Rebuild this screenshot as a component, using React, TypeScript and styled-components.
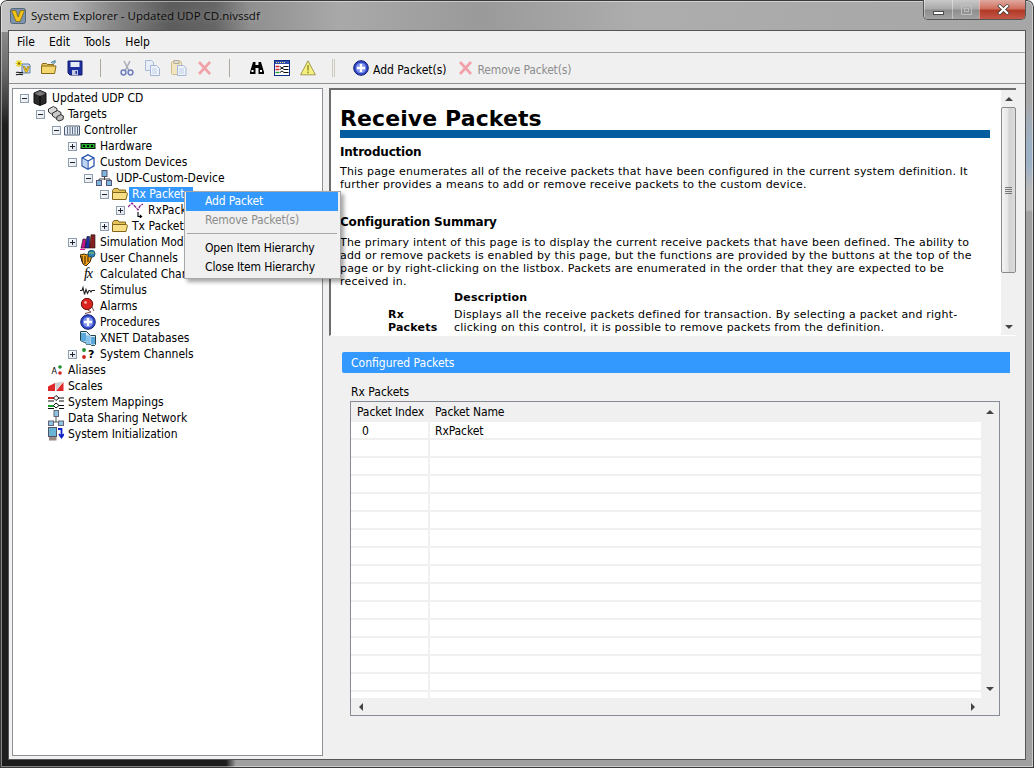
import React from "react";
import styled, { createGlobalStyle } from "styled-components";

const UI = `"DejaVu Sans Condensed", "DejaVu Sans", sans-serif`;

const Global = createGlobalStyle`
  html, body { margin: 0; padding: 0; background: #fff; }
  #root { width: 1034px; height: 768px; overflow: hidden; }
`;

const Frame = styled.div`
  position: relative;
  box-sizing: border-box;
  width: 1034px;
  height: 768px;
  padding: 0 9px 9px 9px;
  display: flex;
  flex-direction: column;
  border-radius: 7px 7px 0 0;
  box-shadow: inset 0 0 0 1px #3a3a3a, inset 0 0 0 2px rgba(255,255,255,.45);
  font: 12px ${UI};
  color: #000;
  background:
    linear-gradient(90deg, #c4c4c4 0, #b0b0b0 70px, #8a8a8a 110px, #5c5c5c 170px, #666 215px, #8f8f8f 250px, #a9a9a9 340px, #9a9a9a 480px, #adadad 640px, #a6a6a6 1034px) top / 100% 32px no-repeat,
    linear-gradient(90deg, #1d1d1d 0, #1d1d1d 226px, #a0a0a0 236px, #a0a0a0 100%) bottom / 100% 10px no-repeat,
    linear-gradient(180deg, #a8a8a8 0, #a8a8a8 100px, #9db1c6 145px, #9db1c6 165px, #b9b9b9 190px, #b9b9b9 210px, #a0a0a0 212px, #a0a0a0 100%) right / 9px 100% no-repeat,
    linear-gradient(180deg, #8c8c8c 30px, #6a6a6a 70px, #3c3c3c 105px, #1e1e1e 125px, #1e1e1e 100%) left / 9px 100% no-repeat;
`;

const TitleBar = styled.header`
  height: 31px;
  flex: none;
  display: flex;
  align-items: flex-start;
`;
const TitleGroup = styled.div`
  display: flex;
  align-items: center;
  gap: 5px;
  margin: 8px 0 0 1px;
`;
const TitleText = styled.span`
  font: 11.5px "Open Sans", "Noto Sans", sans-serif;
  line-height: 16px;
  color: #0a0a0a;
  text-shadow: 0 0 6px rgba(255,255,255,.35);
`;
const WinButtons = styled.div`
  margin-left: auto;
  margin-right: -1px;
  width: 103px;
  height: 20px;
  display: grid;
  grid-template-columns: 28px 27px 48px;
  border: 1px solid #555;
  border-top: 0;
  box-sizing: border-box;
  border-radius: 0 0 5px 5px;
  overflow: hidden;
`;
const WinButton = styled.div<{ $close?: boolean }>`
  display: flex;
  align-items: center;
  justify-content: center;
  border-left: 1px solid rgba(255,255,255,.4);
  background: ${p => p.$close
    ? "linear-gradient(180deg,#dfa99f 0,#d0705f 45%,#b23a26 55%,#c4574a 100%)"
    : "linear-gradient(180deg,#c9c9c9 0,#a8a8a8 48%,#8c8c8c 52%,#a3a3a3 100%)"};
`;
const MinGlyph = styled.i`
  display: block;
  width: 11px;
  height: 4px;
  margin-top: 7px;
  background: #fff;
  border: 1px solid #4a4a4a;
  box-sizing: border-box;
`;
const MaxGlyph = styled.i`
  display: block;
  width: 11px;
  height: 10px;
  border: 1px solid #c0c0c0;
  box-sizing: border-box;
  position: relative;
  &::after { content: ""; position: absolute; inset: 2px; border: 1px solid #bdbdbd; }
`;

const Client = styled.div`
  flex: 1;
  min-height: 0;
  display: flex;
  flex-direction: column;
  background: #f0f0f0;
  outline: 1px solid #555;
`;
const MenuBar = styled.nav`
  height: 21px;
  flex: none;
  display: flex;
  align-items: center;
  padding-left: 8px;
  gap: 14px;
  border-bottom: 1px solid #a0a0a0;
`;
const MenuLabel = styled.span`
  line-height: 18px;
  &:last-child { margin-left: 1px; }
`;
const Toolbar = styled.div`
  height: 30px;
  flex: none;
  display: flex;
  align-items: center;
  padding-left: 6px;
  border-bottom: 1px solid #8f8f8f;
`;
const ToolIcon = styled.span<{ $after: number }>`
  display: flex;
  flex: none;
  width: 16px;
  height: 16px;
  margin-right: ${p => p.$after}px;
`;
const ToolSep = styled.i<{ $after: number; $faint?: boolean }>`
  display: block;
  flex: none;
  width: 1px;
  height: 18px;
  margin-right: ${p => p.$after}px;
  background: ${p => (p.$faint ? "#cfcabf" : "#aea99c")};
`;
const ToolLabel = styled.span<{ $off?: boolean; $after?: number }>`
  color: ${p => (p.$off ? "#8d8d8d" : "#000")};
  margin-right: ${p => p.$after ?? 0}px;
  margin-left: 4px;
  padding-top: 3px;
  letter-spacing: ${p => (p.$off ? "-0.18px" : 0)};
  white-space: nowrap;
`;

const Main = styled.main`
  flex: 1;
  min-height: 0;
  display: flex;
  gap: 6px;
  padding: 4px 0 3px 3px;
`;
const TreePanel = styled.section`
  box-sizing: border-box;
  width: 311px;
  flex: none;
  padding-top: 1px;
  background: #fff;
  border: 1px solid #8c9097;
`;
const Row = styled.div<{ $level: number }>`
  height: 16px;
  display: flex;
  align-items: center;
  padding-left: ${p => 7 + p.$level * 16}px;
  white-space: nowrap;
`;
const Expander = styled.span`
  box-sizing: border-box;
  flex: none;
  width: 9px;
  height: 9px;
  margin-right: 3px;
  border: 1px solid #8f9db0;
  background: linear-gradient(135deg, #fff, #dfe4ea);
  position: relative;
  &[data-kind="none"] { border: 0; background: none; }
  &[data-kind="plus"]::before, &[data-kind="minus"]::before {
    content: ""; position: absolute; left: 1px; top: 3px; width: 5px; height: 1px; background: #223;
  }
  &[data-kind="plus"]::after {
    content: ""; position: absolute; left: 3px; top: 1px; width: 1px; height: 5px; background: #223;
  }
`;
const TreeIcon = styled.span`
  display: flex;
  flex: none;
  width: 16px;
  height: 16px;
`;
const TreeLabel = styled.span<{ $on?: boolean }>`
  margin-left: 1px;
  padding: 0 3px;
  line-height: 15px;
  color: ${p => (p.$on ? "#fff" : "#000")};
  background: ${p => (p.$on ? "#3399ff" : "transparent")};
`;

const RightPane = styled.section`
  flex: 1;
  min-width: 0;
  display: flex;
  flex-direction: column;
`;
const HelpBox = styled.div`
  box-sizing: border-box;
  width: 687px;
  height: 248px;
  flex: none;
  display: flex;
  background: #fff;
  border-top: 2px solid #6d6d6d;
  border-left: 2px solid #6d6d6d;
  border-bottom: 1px solid #fff;
  overflow: hidden;
`;
const Article = styled.article`
  flex: 1;
  min-width: 0;
  box-sizing: border-box;
  padding: 17px 11px 0 9px;
  font: 11px/13px "DejaVu Sans", sans-serif;
  letter-spacing: 0.2px;
  overflow: hidden;
`;
const H1 = styled.h1`
  margin: 0;
  font: bold 22px/23px "DejaVu Sans", sans-serif;
  letter-spacing: 0.1px;
  border-bottom: 8px solid #005c9e;
`;
const H2 = styled.h2<{ $top: number; $bottom: number }>`
  margin: ${p => p.$top}px 0 ${p => p.$bottom}px;
  font: bold 12px/15px "DejaVu Sans", sans-serif;
  letter-spacing: -0.2px;
`;
const Para = styled.p`
  margin: 0;
  white-space: pre-line;
`;
const DefTable = styled.div`
  display: grid;
  grid-template-columns: 66px 1fr;
  margin-left: 48px;
  margin-top: 3px;
`;
const DefHead = styled.b`
  display: block;
  padding-bottom: 4px;
  line-height: 13px;
  &:first-child { visibility: hidden; }
`;
const DefText = styled.span`
  white-space: pre-line;
`;

const VBar = styled.div`
  width: 15px;
  flex: none;
  display: flex;
  flex-direction: column;
  align-items: stretch;
  background: #f0f0f0;
`;
const BarArrow = styled.div<{ $dir: "up" | "down" | "left" | "right" }>`
  flex: none;
  display: flex;
  align-items: center;
  justify-content: center;
  width: 15px;
  height: 17px;
  &::before {
    content: "";
    border-style: solid;
    border-color: transparent;
    ${p => p.$dir === "up" && "border-width: 0 4px 4px; border-bottom-color: #444;"}
    ${p => p.$dir === "down" && "border-width: 4px 4px 0; border-top-color: #444;"}
    ${p => p.$dir === "left" && "border-width: 4px 4px 4px 0; border-right-color: #444;"}
    ${p => p.$dir === "right" && "border-width: 4px 0 4px 4px; border-left-color: #444;"}
  }
`;
const Thumb = styled.div`
  box-sizing: border-box;
  flex: none;
  height: 166px;
  border: 1px solid #8a8a8a;
  border-radius: 2px;
  background: linear-gradient(90deg, #f4f4f4 0, #e6e6e6 45%, #d2d2d2 55%, #dcdcdc 100%);
  display: flex;
  flex-direction: column;
  align-items: center;
  justify-content: center;
  gap: 1px;
`;
const Grip = styled.i`
  display: block;
  width: 7px;
  height: 1px;
  background: #777;
`;
const BarFill = styled.div`
  flex: 1;
`;

const SectionBar = styled.div`
  box-sizing: border-box;
  margin: 16px 0 0 13px;
  width: 668px;
  height: 21px;
  flex: none;
  display: flex;
  align-items: center;
  padding-left: 9px;
  background: #3399ff;
  color: #fff;
  border-radius: 2px 0 0 2px;
`;
const FieldLabel = styled.div`
  margin: 12px 0 0 22px;
  height: 16px;
  line-height: 15px;
  flex: none;
`;
const TableBox = styled.div`
  box-sizing: border-box;
  margin-left: 21px;
  width: 650px;
  height: 315px;
  flex: none;
  display: grid;
  grid-template-columns: 1fr 18px;
  grid-template-rows: 1fr 17px;
  border: 1px solid #868b96;
  background: #f0f0f0;
`;
const TableBody = styled.div`
  overflow: hidden;
  background: #fff;
  min-height: 0;
`;
const TableRow = styled.div<{ $head?: boolean }>`
  box-sizing: border-box;
  display: grid;
  grid-template-columns: 79px 1fr;
  height: ${p => (p.$head ? 20 : 18)}px;
  background: ${p => (p.$head ? "#f0f0f0" : "#fff")};
  border-bottom: ${p => (p.$head ? 0 : "2px solid #f0f0f0")};
`;
const Cell = styled.div<{ $center?: boolean; $first?: boolean; $head?: boolean }>`
  display: flex;
  align-items: center;
  padding-left: ${p => (p.$center ? 11 : p.$first ? 6 : 5)}px;
  padding-top: ${p => (p.$head ? 0 : 1)}px;
  border-right: ${p => (p.$first ? "2px solid #f0f0f0" : 0)};
  letter-spacing: -0.1px;
  white-space: nowrap;
`;
const TableV = styled(VBar)`
  width: 16px;
  margin-left: 1px;
  padding: 1px 0;
  box-sizing: border-box;
  border-right: 1px solid #f0f0f0;
  grid-row: 1;
  grid-column: 2;
`;
const HBar = styled.div`
  grid-row: 2;
  grid-column: 1;
  display: flex;
  justify-content: space-between;
  background: #f0f0f0;
  padding: 0 1px 0 2px;
`;

const ContextMenu = styled.div`
  position: absolute;
  left: 184px;
  top: 191px;
  box-sizing: border-box;
  width: 157px;
  height: 88px;
  padding: 0 1px;
  background: #f0f0f0;
  border: 1px solid #a8a8a8;
  box-shadow: 3px 3px 4px rgba(0,0,0,.35);
  letter-spacing: -0.15px;
`;
const MenuItem = styled.div<{ $on?: boolean; $off?: boolean }>`
  height: 19px;
  width: 152px;
  box-sizing: border-box;
  padding: 0 0 1px 19px;
  display: flex;
  align-items: center;
  background: ${p => (p.$on ? "#3399ff" : "transparent")};
  color: ${p => (p.$on ? "#fff" : p.$off ? "#8d8d8d" : "#000")};
`;
const MenuRule = styled.div`
  height: 1px;
  margin: 3px 1px 5px 1px;
  width: 150px;
  background: #a8a8a8;
`;

const Svg = ({ children, s = 16 }: { children: React.ReactNode; s?: number }) => (
  <svg width={s} height={s} viewBox="0 0 16 16">{children}</svg>
);

const LogoIcon = () => (
  <Svg>
    <rect x="0.5" y="0.5" width="15" height="15" rx="2" fill="#7d93ab" stroke="#55677d" />
    <path d="M1.5 2.5h4.2l2.4 6.5 2.4-6.5h4L10 13.5H6z" fill="#f2c318" stroke="#6b5000" strokeWidth=".6" />
  </Svg>
);
const CloseGlyph = () => (
  <svg width="13" height="11" viewBox="0 0 13 11">
    <path d="M1.5 1l10 9M11.5 1l-10 9" stroke="#333" strokeWidth="3.6" />
    <path d="M2 1.2l9 8.6M11 1.2l-9 8.6" stroke="#fff" strokeWidth="2.2" />
  </svg>
);
const NewIcon = () => (
  <Svg>
    <path d="M7 4h7l1 1v8H7z" fill="#c9d9ef" stroke="#5e7eaa" />
    <path d="M8 6.5h2l1.2 3.6 1.3-3.6H14.5L12 12.5h-1.4z" fill="#f2c318" stroke="#665000" strokeWidth=".4" />
    <path d="M4 0v7M0.5 3.5h7M1.5 1l5 5M6.5 1l-5 5" stroke="#e8cf00" strokeWidth="1.1" />
    <path d="M3.5 2.5h1v2h-1z" fill="#111" />
    <path d="M1 12.5c1.5-1 3 .8 7-.2M1 14.5c2 .6 4-1 7 .3" stroke="#222" strokeWidth="1.2" fill="none" />
  </Svg>
);
const OpenIcon = () => (
  <Svg>
    <path d="M.5 5.5l1-2h4l1 1h6v3H.5z" fill="#e9c45a" stroke="#8a6a18" />
    <path d="M.5 13.5v-6.5l1-1h13.5l-1.4 7.5z" fill="#f4d76f" stroke="#8a6a18" />
    <path d="M10 3c1-1.6 2.4-2 4-1.6M14 0v3h-3" stroke="#3a7ea0" fill="none" />
  </Svg>
);
const SaveIcon = () => (
  <Svg>
    <path d="M1 1h14v14H3l-2-2z" fill="#1d2f9f" stroke="#121e6d" />
    <rect x="3.5" y="2" width="9" height="5" fill="#e7ebf5" />
    <rect x="5" y="10" width="6" height="5" fill="#c5cbe0" />
    <rect x="8.5" y="11" width="1.5" height="3" fill="#1d2f9f" />
  </Svg>
);
const CutIcon = () => (
  <Svg>
    <path d="M5 1l4.6 9M11 1L6.4 10" stroke="#a9aeb8" strokeWidth="1.6" fill="none" />
    <circle cx="4.5" cy="12.5" r="2.4" fill="none" stroke="#6d7dbd" strokeWidth="1.5" />
    <circle cx="11.5" cy="12.5" r="2.4" fill="none" stroke="#6d7dbd" strokeWidth="1.5" />
  </Svg>
);
const CopyIcon = () => (
  <Svg>
    <path d="M1.5 .5h6l2 2v8h-8z" fill="#e8eef8" stroke="#aabbd8" />
    <path d="M6.5 5.5h6l3 3v7h-9z" fill="#eef3fb" stroke="#a3b6d6" />
    <path d="M8 9h5M8 11h5M8 13h5" stroke="#c2cfe4" />
  </Svg>
);
const PasteIcon = () => (
  <Svg>
    <rect x=".5" y="1.5" width="10" height="13" rx="1" fill="#f1e5c2" stroke="#cfbd8b" />
    <rect x="3" y=".5" width="5" height="3" fill="#ddd" stroke="#b8ad90" />
    <path d="M6.5 5.5h6l2.5 2.5v7.5H6.5z" fill="#eef3fb" stroke="#a3b6d6" />
    <path d="M8 9h5M8 11h5M8 13h5" stroke="#c2cfe4" />
  </Svg>
);
const DeleteIcon = () => (
  <Svg>
    <path d="M2 2l11 12M13 2L2 14" stroke="#f0a2a8" strokeWidth="2.6" />
  </Svg>
);
const BinocIcon = () => (
  <Svg>
    <path d="M4 2h2.5v3H9.5V2H12l3 10v2H9.5V8h-3v6H1v-2z" fill="#000" />
    <rect x="2.5" y="10" width="2" height="2" fill="#fff" />
    <rect x="11" y="10" width="2" height="2" fill="#fff" />
  </Svg>
);
const ListIcon = () => (
  <Svg>
    <rect x=".5" y=".5" width="15" height="15" fill="#fff" stroke="#0f2d86" />
    <rect x="1" y="1" width="14" height="3" fill="#2f4cb0" />
    <path d="M2 2.5h1M4 2.5h1M6 2.5h1M8 2.5h1M10 2.5h1" stroke="#ffe766" />
    <path d="M1.5 6.5h4M1.5 9.5h4" stroke="#d2262c" strokeWidth="1.4" />
    <path d="M1.5 12.5h4" stroke="#1e9b37" strokeWidth="1.4" />
    <path d="M10 6.5h4.5M10 9.5h4.5M10 12.5h4.5" stroke="#111" />
    <path d="M6 6.5l2 1.5 2-1.5M6 9.5l2-1.5 2 1.5M6 12.5l2-1.5 2 1.5" stroke="#111" fill="none" />
  </Svg>
);
const WarnIcon = () => (
  <Svg>
    <path d="M8 .8l7.4 14H.6z" fill="#f6f07e" stroke="#9f9a55" />
    <rect x="7.2" y="5" width="1.7" height="5.5" fill="#a39b32" />
    <rect x="7.2" y="11.5" width="1.7" height="1.8" fill="#a39b32" />
  </Svg>
);
const AddIcon = () => (
  <Svg>
    <circle cx="8" cy="8" r="7.3" fill="#3048c8" stroke="#14206f" />
    <circle cx="8" cy="8" r="5.2" fill="#7f92ea" />
    <path d="M8 4v8M4 8h8" stroke="#fff" strokeWidth="2.4" />
  </Svg>
);
const CubeBlack = () => (
  <Svg>
    <path d="M8 .5l6 2.5v10l-6 2.5-6-2.5V3z" fill="#2a2a2a" stroke="#111" />
    <path d="M2.5 3.5L8 6l5.5-2.5L8 1z" fill="#7a7a7a" />
    <path d="M8 6v9" stroke="#000" />
  </Svg>
);
const TargetsIcon = () => (
  <Svg>
    <path d="M0.5 3l5-2.5 3.5 2-.5 4-5 1.5-3-2z" fill="#d8d8d8" stroke="#333" />
    <path d="M4.5 7l5-2.5 3.5 2-.5 4-5 1.5-3-2z" fill="#cacaca" stroke="#333" />
    <path d="M9 10.5l4-2 2.5 1.5-.5 3.5-4 1.5-2.5-1.5z" fill="#bcbcbc" stroke="#333" />
  </Svg>
);
const ControllerIcon = () => (
  <Svg>
    <path d="M.5 5l2-1h13v9h-15z" fill="#e6ecf4" stroke="#4a5a72" />
    <path d="M3.5 5v7M6 5v7M8.5 5v7M11 5v7M13.5 5v7" stroke="#5d6d86" />
  </Svg>
);
const HardwareIcon = () => (
  <Svg>
    <rect x="1" y="5.5" width="14" height="5" fill="#1fae2c" stroke="#111" />
    <path d="M3 7h2v2H3zM7 7h2v2H7zM11 7h2v2h-2z" fill="#0a0a0a" />
  </Svg>
);
const CubeBlue = () => (
  <Svg>
    <path d="M8 .8l6 3v8l-6 3.4-6-3.4v-8z" fill="#fff" stroke="#2a57b0" strokeWidth="1.3" />
    <path d="M2 3.8l6 3.2 6-3.2M8 7v8" stroke="#2a57b0" fill="none" strokeWidth="1.3" />
    <path d="M2.8 4.8L7.4 7.4v6.4L2.8 11.2z" fill="#bcd3f2" />
  </Svg>
);
const NetIcon = () => (
  <Svg>
    <rect x="6" y=".5" width="5" height="6" fill="#7fb7dc" stroke="#557" />
    <path d="M8.5 6v4M3 10.5V9h11v1.5" stroke="#444" fill="none" />
    <rect x=".5" y="10.5" width="5" height="5" fill="#7fb7dc" stroke="#557" />
    <rect x="10.5" y="10.5" width="5" height="5" fill="#7fb7dc" stroke="#557" />
  </Svg>
);
const FolderIcon = () => (
  <Svg>
    <path d="M.5 4.5l1.5-2h4l1 1.5h6.5V7H.5z" fill="#e5c25a" stroke="#80651a" />
    <path d="M.5 13.5V6.5h13.8l1.2.8-1.5 6.2z" fill="#f8df86" stroke="#80651a" />
  </Svg>
);
const PacketIcon = () => (
  <Svg>
    <path d="M0 5l4-4 4 4.5 2 2.5 2-4 3-2" stroke="#8a1c8a" strokeWidth="1.2" fill="none" strokeDasharray="3.4 .8" />
    <path d="M10 10v4.5h3M11.8 12.8l1.8 1.7-1.8 1.4" stroke="#000" strokeWidth="1.1" fill="none" />
  </Svg>
);
const SimIcon = () => (
  <Svg>
    <path d="M1 14L3 5h2.5v9z" fill="#c8158c" stroke="#111" strokeWidth=".6" />
    <path d="M5 14L7 2.5h2.5V14z" fill="#1c2fa5" stroke="#111" strokeWidth=".6" />
    <path d="M9.5 14L11 .8h4V14z" fill="#862020" stroke="#111" strokeWidth=".6" />
    <path d="M0 15.5h5" stroke="#e018a0" strokeWidth="1.4" />
  </Svg>
);
const UserChanIcon = () => (
  <Svg>
    <path d="M0 5l4-1 3 1 3-1 2 2-2 6-4 4-3-2z" fill="#f2a21c" stroke="#3a2500" />
    <path d="M2 6v6M5 6v8M8 6v6" stroke="#2a1a00" />
    <circle cx="11.5" cy="3.8" r="3.5" fill="#2c7fb8" stroke="#164d70" />
    <path d="M9 3h5" stroke="#7ac35a" strokeWidth="1.3" />
  </Svg>
);
const FxGlyph = styled.span`
  font: italic 14px/16px "Liberation Serif", serif;
  width: 16px;
  text-align: center;
  letter-spacing: -1px;
`;
const FxIcon = () => <FxGlyph>fx</FxGlyph>;
const StimIcon = () => (
  <Svg>
    <path d="M0 8.5h2l1-3 1.5 7 1.5-5 1.5 4 1.5-3h1l1 1.5 1-1.5h3" stroke="#222" strokeWidth="1.1" fill="none" />
  </Svg>
);
const AlarmIcon = () => (
  <Svg>
    <circle cx="7" cy="6" r="5.7" fill="#d8231f" stroke="#6b0f0f" />
    <circle cx="5.5" cy="4.5" r="1.4" fill="#f8a8a0" />
    <path d="M8 12l3 2-6 1.5M12 9l2 4" stroke="#7a4a4a" fill="none" />
  </Svg>
);
const DbIcon = () => (
  <Svg>
    <path d="M.5 1.5h6l4 4h5v9l-1 1h-3l-1-1h-4l-1-2h-1l-4-2z" fill="#d8e8f4" stroke="#244" />
    <path d="M1 3h5v7.5l-1 1H2l-1-1z" fill="#5ba8dc" />
    <path d="M6 5.5h4.5v8l-1 1h-2.5l-1-1z" fill="#86c2ea" />
    <path d="M11 7h4v6.5l-1 1h-2l-1-1z" fill="#5ba8dc" />
  </Svg>
);
const SysChanIcon = () => (
  <Svg>
    <circle cx="4" cy="4" r="1.9" fill="#1c8f2a" />
    <circle cx="4" cy="11" r="1.9" fill="#d2231f" />
    <text x="8" y="12" fontSize="11" fontWeight="bold" fontFamily="DejaVu Sans">?</text>
  </Svg>
);
const AliasIcon = () => (
  <Svg>
    <text x="3.5" y="12" fontSize="8" fontFamily="DejaVu Sans">A</text>
    <circle cx="12" cy="5" r="1.8" fill="#1c8f2a" />
    <circle cx="12" cy="11" r="1.8" fill="#d2231f" />
  </Svg>
);
const ScalesIcon = () => (
  <Svg>
    <path d="M0 8.5L7 5v8H0z" fill="#e0282a" />
    <path d="M8 13L15.5 4v9z" fill="#e0282a" />
    <path d="M7 5L15 3.5 8 13z" fill="#cfcfcf" />
  </Svg>
);
const MappingsIcon = () => (
  <Svg>
    <path d="M0 4h6" stroke="#d2231f" strokeWidth="2" />
    <path d="M0 7h6M0 14.5h6" stroke="#111" />
    <path d="M0 12h6" stroke="#1c9f32" strokeWidth="2" />
    <path d="M8 1.5L11 4 8 6.5 5.5 4zM8 9L11 11.5 8 14 5.5 11.5z" fill="#fff" stroke="#111" />
    <path d="M11 4h5M11 7h5M11 11.5h5M11 14.5h5" stroke="#111" />
  </Svg>
);
const SharingIcon = () => (
  <Svg>
    <rect x="6" y=".5" width="4.5" height="6" fill="#8cc3e4" stroke="#667" />
    <path d="M8 6.5V12M3 12h10" stroke="#555" />
    <rect x="0.5" y="11" width="5" height="4.5" fill="#8cc3e4" stroke="#667" />
    <rect x="10.5" y="11" width="5" height="4.5" fill="#8cc3e4" stroke="#667" />
  </Svg>
);
const InitIcon = () => (
  <Svg>
    <rect x=".5" y="1.5" width="8" height="9" fill="#69b4d4" stroke="#556" />
    <rect x="1" y="11" width="7.5" height="3.5" fill="#9a8a84" />
    <path d="M10 3h3.5v7M11 8l2.5 3.5L16 8" stroke="#1020c8" strokeWidth="1.8" fill="none" />
  </Svg>
);

type TreeNode = { level: number; kind: "plus" | "minus" | "none"; icon: React.ReactNode; label: string; on?: boolean };
const tree: TreeNode[] = [
  { level: 0, kind: "minus", icon: <CubeBlack />, label: "Updated UDP CD" },
  { level: 1, kind: "minus", icon: <TargetsIcon />, label: "Targets" },
  { level: 2, kind: "minus", icon: <ControllerIcon />, label: "Controller" },
  { level: 3, kind: "plus", icon: <HardwareIcon />, label: "Hardware" },
  { level: 3, kind: "minus", icon: <CubeBlue />, label: "Custom Devices" },
  { level: 4, kind: "minus", icon: <NetIcon />, label: "UDP-Custom-Device" },
  { level: 5, kind: "minus", icon: <FolderIcon />, label: "Rx Packets", on: true },
  { level: 6, kind: "plus", icon: <PacketIcon />, label: "RxPacket" },
  { level: 5, kind: "plus", icon: <FolderIcon />, label: "Tx Packets" },
  { level: 3, kind: "plus", icon: <SimIcon />, label: "Simulation Models" },
  { level: 3, kind: "none", icon: <UserChanIcon />, label: "User Channels" },
  { level: 3, kind: "none", icon: <FxIcon />, label: "Calculated Channels" },
  { level: 3, kind: "none", icon: <StimIcon />, label: "Stimulus" },
  { level: 3, kind: "none", icon: <AlarmIcon />, label: "Alarms" },
  { level: 3, kind: "none", icon: <AddIcon />, label: "Procedures" },
  { level: 3, kind: "none", icon: <DbIcon />, label: "XNET Databases" },
  { level: 3, kind: "plus", icon: <SysChanIcon />, label: "System Channels" },
  { level: 1, kind: "none", icon: <AliasIcon />, label: "Aliases" },
  { level: 1, kind: "none", icon: <ScalesIcon />, label: "Scales" },
  { level: 1, kind: "none", icon: <MappingsIcon />, label: "System Mappings" },
  { level: 1, kind: "none", icon: <SharingIcon />, label: "Data Sharing Network" },
  { level: 1, kind: "none", icon: <InitIcon />, label: "System Initialization" },
];

export default function App() {
  return (
    <>
      <Global />
      <Frame>
        <TitleBar>
          <TitleGroup>
            <LogoIcon />
            <TitleText>System Explorer - Updated UDP CD.nivssdf</TitleText>
          </TitleGroup>
          <WinButtons>
            <WinButton><MinGlyph /></WinButton>
            <WinButton><MaxGlyph /></WinButton>
            <WinButton $close><CloseGlyph /></WinButton>
          </WinButtons>
        </TitleBar>
        <Client>
          <MenuBar>
            <MenuLabel>File</MenuLabel>
            <MenuLabel>Edit</MenuLabel>
            <MenuLabel>Tools</MenuLabel>
            <MenuLabel>Help</MenuLabel>
          </MenuBar>
          <Toolbar>
            <ToolIcon $after={10}><NewIcon /></ToolIcon>
            <ToolIcon $after={10}><OpenIcon /></ToolIcon>
            <ToolIcon $after={17}><SaveIcon /></ToolIcon>
            <ToolSep $after={18} />
            <ToolIcon $after={9}><CutIcon /></ToolIcon>
            <ToolIcon $after={11}><CopyIcon /></ToolIcon>
            <ToolIcon $after={10}><PasteIcon /></ToolIcon>
            <ToolIcon $after={16}><DeleteIcon /></ToolIcon>
            <ToolSep $after={19} />
            <ToolIcon $after={9}><BinocIcon /></ToolIcon>
            <ToolIcon $after={10}><ListIcon /></ToolIcon>
            <ToolIcon $after={16}><WarnIcon /></ToolIcon>
            <ToolSep $after={1} $faint />
            <ToolSep $after={18} $faint />
            <ToolIcon $after={0}><AddIcon /></ToolIcon>
            <ToolLabel $after={11}>Add Packet(s)</ToolLabel>
            <ToolIcon $after={0}><DeleteIcon /></ToolIcon>
            <ToolLabel $off>Remove Packet(s)</ToolLabel>
          </Toolbar>
          <Main>
            <TreePanel>
              {tree.map(n => (
                <Row key={n.label} $level={n.level}>
                  <Expander data-kind={n.kind} />
                  <TreeIcon>{n.icon}</TreeIcon>
                  <TreeLabel $on={n.on}>{n.label}</TreeLabel>
                </Row>
              ))}
            </TreePanel>
            <RightPane>
              <HelpBox>
                <Article>
                  <H1>Receive Packets</H1>
                  <H2 $top={7} $bottom={5}>Introduction</H2>
                  <Para>{"This page enumerates all of the receive packets that have been configured in the current system definition. It\nfurther provides a means to add or remove receive packets to the custom device."}</Para>
                  <H2 $top={24} $bottom={6}>Configuration Summary</H2>
                  <Para>{"The primary intent of this page is to display the current receive packets that have been defined. The ability to\nadd or remove packets is enabled by this page, but the functions are provided by the buttons at the top of the\npage or by right-clicking on the listbox. Packets are enumerated in the order that they are expected to be\nreceived in."}</Para>
                  <DefTable>
                    <DefHead>Name</DefHead>
                    <DefHead>Description</DefHead>
                    <b>Rx Packets</b>
                    <DefText>{"Displays all the receive packets defined for transaction. By selecting a packet and right-\nclicking on this control, it is possible to remove packets from the definition."}</DefText>
                  </DefTable>
                </Article>
                <VBar>
                  <BarArrow $dir="up" />
                  <Thumb><Grip /><Grip /><Grip /><Grip /></Thumb>
                  <BarFill />
                  <BarArrow $dir="down" />
                </VBar>
              </HelpBox>
              <SectionBar>Configured Packets</SectionBar>
              <FieldLabel>Rx Packets</FieldLabel>
              <TableBox>
                <TableBody>
                  <TableRow $head>
                    <Cell $first $head>Packet Index</Cell>
                    <Cell $head>Packet Name</Cell>
                  </TableRow>
                  <TableRow>
                    <Cell $first $center>0</Cell>
                    <Cell>RxPacket</Cell>
                  </TableRow>
                  {Array.from({ length: 15 }, (_, i) => (
                    <TableRow key={i}>
                      <Cell $first />
                      <Cell />
                    </TableRow>
                  ))}
                </TableBody>
                <TableV>
                  <BarArrow $dir="up" />
                  <BarFill />
                  <BarArrow $dir="down" />
                </TableV>
                <HBar>
                  <BarArrow $dir="left" />
                  <BarArrow $dir="right" />
                </HBar>
              </TableBox>
            </RightPane>
          </Main>
        </Client>
        <ContextMenu>
          <MenuItem $on>Add Packet</MenuItem>
          <MenuItem $off>Remove Packet(s)</MenuItem>
          <MenuRule />
          <MenuItem>Open Item Hierarchy</MenuItem>
          <MenuItem>Close Item Hierarchy</MenuItem>
        </ContextMenu>
      </Frame>
    </>
  );
}
